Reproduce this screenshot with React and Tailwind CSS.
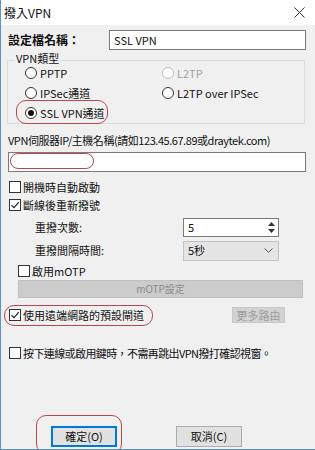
import React from "react";

const FONT = { fontFamily: '"Noto Sans CJK TC", "Noto Sans", sans-serif' };

function Radio({ checked, disabled, label }) {
  return (
    <div className="flex items-center h-full">
      <span
        className={`w-[12px] h-[12px] rounded-full border bg-white flex items-center justify-center shrink-0 ${
          disabled ? "border-[#bcbcbc]" : "border-[#333333]"
        }`}
      >
        {checked && <span className="w-[6px] h-[6px] rounded-full bg-[#111]" />}
      </span>
      <span className={`ml-[3px] ${disabled ? "text-[#a0a0a0]" : "text-[#111]"}`}>{label}</span>
    </div>
  );
}

function Check({ checked, label, className = "", textClass = "" }) {
  return (
    <div className={`flex items-center ${className}`}>
      <span className="w-[12px] h-[12px] border border-[#333333] bg-white shrink-0 flex items-center justify-center">
        {checked && (
          <svg width="10" height="10" viewBox="0 0 10 10">
            <path d="M1.5 5.2 L4 7.6 L8.8 2.2" fill="none" stroke="#222" strokeWidth="1.2" />
          </svg>
        )}
      </span>
      <span className={`ml-[2px] text-[#111] whitespace-nowrap ${textClass}`}>{label}</span>
    </div>
  );
}

export default function App() {
  return (
    <div
      style={FONT}
      className="w-[315px] h-[450px] bg-[#f0f0f0] border-l border-b border-[#5d95c9] flex flex-col text-[11px] leading-none text-[#111] overflow-hidden"
    >
      {/* Title bar */}
      <div className="h-[25px] bg-white flex items-center justify-between pl-[3px] pr-[10px] shrink-0">
        <span className="text-[12px] text-[#111]">撥入VPN</span>
        <svg width="11" height="11" viewBox="0 0 11 11">
          <path d="M0.5 0.5 L10.5 10.5 M10.5 0.5 L0.5 10.5" stroke="#333" strokeWidth="1" />
        </svg>
      </div>

      <div className="flex flex-col pl-[7px] pr-[8px]">
        {/* Profile name */}
        <div className="mt-[5px] h-[20px] flex items-center">
          <span className="w-[101px] text-[12px] font-bold">設定檔名稱：</span>
          <div className="w-[197px] h-[20px] bg-white border border-[#7a7a7a] flex items-center pl-[4px]">
            SSL VPN
          </div>
        </div>

        {/* VPN type group */}
        <div className="relative mt-[10px] -ml-px w-[298px] border border-[#dcdcdc] pt-[2px]">
          <span className="absolute left-[7px] -top-[8px] bg-[#f0f0f0] px-px text-[11px] leading-[11px]">VPN類型</span>
          <div className="h-[20px] flex pl-[17px]">
            <div className="w-[137px]">
              <Radio label="PPTP" />
            </div>
            <Radio label="L2TP" disabled />
          </div>
          <div className="h-[20px] flex pl-[17px]">
            <div className="w-[137px]">
              <Radio label="IPSec通道" />
            </div>
            <Radio label="L2TP over IPSec" />
          </div>
          <div className="relative h-[20px] flex pl-[17px]">
            <Radio label="SSL VPN通道" checked />
            <span className="absolute left-[8px] -top-[3px] w-[92px] h-[24px] rounded-[10px] border-[1.5px] border-[#b9474f]" />
          </div>
        </div>

        {/* Server */}
        <div className="mt-[9px] h-[14px] flex items-center tracking-[-0.45px] whitespace-nowrap">
          VPN伺服器IP/主機名稱(請如123.45.67.89或draytek.com)
        </div>
        <div className="relative mt-[5px] w-[298px] h-[20px] bg-white border border-[#7a7a7a]">
          <span className="absolute left-[1px] top-0 w-[84px] h-[16px] rounded-[8px] border-[1.5px] border-[#b9474f]" />
        </div>

        {/* Checkboxes */}
        <Check className="mt-[6px] h-[18px] ml-[1px]" label="開機時自動啟動" />
        <Check className="h-[18px] ml-[1px]" checked label="斷線後重新撥號" />

        {/* Redial count */}
        <div className="mt-[4px] h-[19px] flex items-center">
          <span className="w-[175px] pl-[27px]">重撥次數:</span>
          <div className="w-[96px] h-[19px] bg-white border border-[#7a7a7a] flex">
            <span className="flex-1 flex items-center pl-[4px]">5</span>
            <div className="w-[12px] flex flex-col items-center justify-center gap-[3px] mr-[1px]">
              <svg width="7" height="4" viewBox="0 0 7 4">
                <path d="M0 4 L3.5 0 L7 4 Z" fill="#333" />
              </svg>
              <svg width="7" height="4" viewBox="0 0 7 4">
                <path d="M0 0 L3.5 4 L7 0 Z" fill="#333" />
              </svg>
            </div>
          </div>
        </div>

        {/* Redial interval */}
        <div className="mt-[4px] h-[19px] flex items-center">
          <span className="w-[175px] pl-[27px]">重撥間隔時間:</span>
          <div className="w-[96px] h-[20px] bg-[#e5e5e5] border border-[#c3c3c3] flex items-center justify-between pl-[4px] pr-[5px]">
            <span>5秒</span>
            <svg width="9" height="5" viewBox="0 0 9 5">
              <path d="M0.5 0.5 L4.5 4.3 L8.5 0.5" fill="none" stroke="#555" strokeWidth="1" />
            </svg>
          </div>
        </div>

        {/* mOTP */}
        <Check className="mt-[3px] h-[16px] ml-[10px]" label="啟用mOTP" />
        <div className="mt-[1px] ml-[10px] w-[285px] h-[18px] bg-[#cccccc] border border-[#c0c0c0] flex items-center justify-center text-[#8a8a8a] text-[10px]">
          mOTP設定
        </div>

        {/* Default gateway */}
        <div className="relative mt-[9px] h-[16px] flex items-center">
          <Check className="ml-[1px]" checked label="使用遠端網路的預設閘道" />
          <div className="ml-[88px] w-[53px] h-[16px] bg-[#d2d2d2] border border-[#c8c8c8] flex items-center justify-center text-[#9c9c9c]">
            更多路由
          </div>
          <span className="absolute -left-[4px] -top-[2px] w-[149px] h-[21px] rounded-[10px] border-[1.5px] border-[#b9474f]" />
        </div>

        {/* No confirm */}
        <Check
          className="mt-[22px] h-[16px] ml-[1px]"
          textClass="tracking-[-0.6px]"
          label="按下連線或啟用鍵時，不需再跳出VPN撥打確認視窗。"
        />

        {/* Buttons */}
        <div className="mt-[65px] h-[21px] flex">
          <div className="relative ml-[43px] w-[66px] h-[21px]">
            <div className="w-full h-full bg-[#e1e1e1] border-2 border-[#0078d7] flex items-center justify-center">
              確定(O)
            </div>
            <span className="absolute -left-[15px] -top-[11px] w-[86px] h-[39px] rounded-[10px] border-[1.5px] border-[#b9474f]" />
          </div>
          <div className="ml-[59px] w-[66px] h-[21px] bg-[#e1e1e1] border border-[#adadad] flex items-center justify-center">
            取消(C)
          </div>
        </div>
      </div>
    </div>
  );
}
